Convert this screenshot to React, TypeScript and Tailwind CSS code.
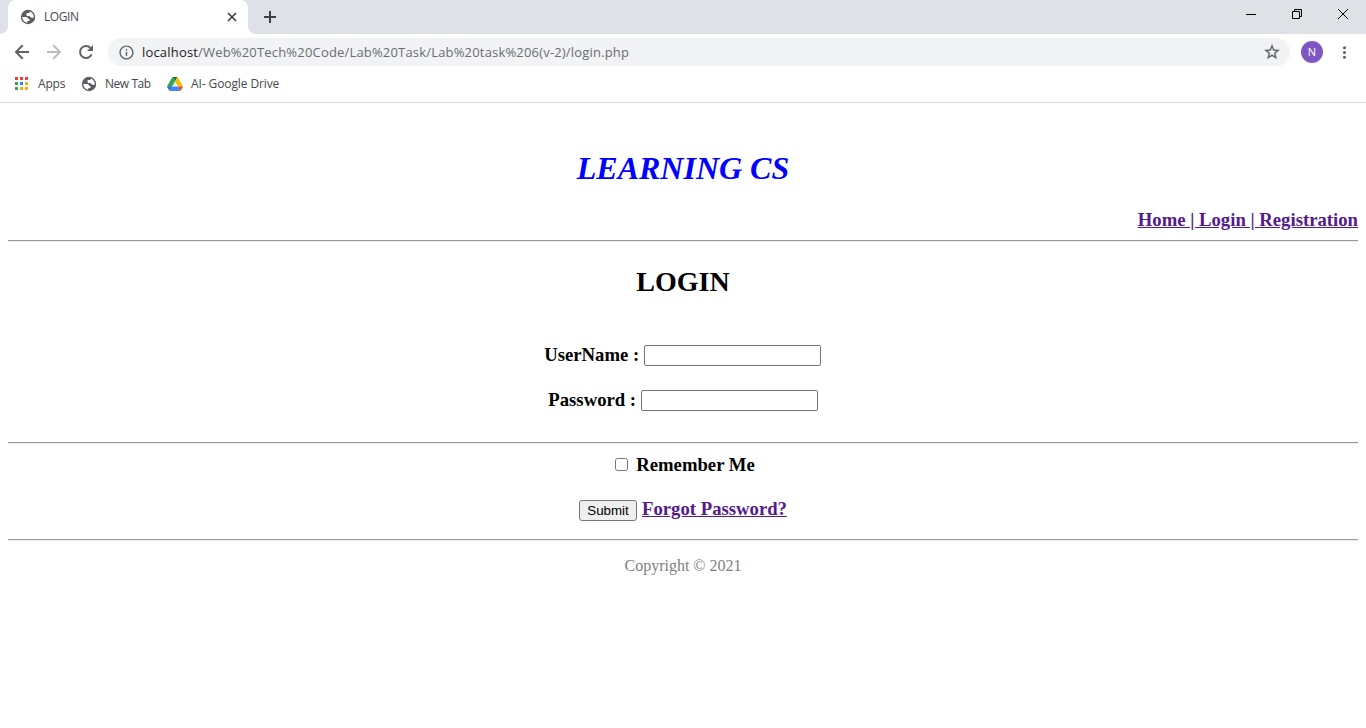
import React from "react";
import { MdInfoOutline, MdMoreVert } from "react-icons/md";

function Globe() {
  return (
    <svg width="16" height="16" viewBox="0 0 16 16" className="shrink-0">
      <circle cx="8" cy="8" r="7.2" fill="#5a5e63" />
      <path
        d="M2.300 8h3.600c1.500 0 2.300.8 2.300 2h1.200v2.100H7.300v1.600C4.400 13.400 2.300 11 2.300 8zM9.800 2.600c0 1-.5 1.500-1.500 1.500H6.600v1.900c0 .7.400 1 1.100 1h1.800c.5 1.200 1.300 1.700 2.500 1.700h1.700c.4-2.800-1.200-5.100-3.900-6.100z"
        fill="#fff"
      />
    </svg>
  );
}

function DriveLogo() {
  return (
    <svg width="16" height="14" viewBox="0 0 87.3 78" className="shrink-0">
      <path d="M43.650 25 29.900 1.200c-1.350.8-2.500 1.900-3.300 3.300L1.200 48.500A9 9 0 0 0 0 53l7 15 20.500-15z" fill="#34a853" />
      <path d="M43.650 25 57.400 1.200C56.050.4 54.500 0 52.900 0H34.400c-1.600 0-3.150.45-4.500 1.200z" fill="#188038" />
      <path d="M73.400 26.500 60.700 4.500c-.8-1.400-1.950-2.500-3.300-3.300L43.650 25 59.800 53h27.450c0-1.550-.4-3.100-1.200-4.500z" fill="#fbbc04" />
      <path d="M59.800 53H27.500L13.750 76.800c1.350.8 2.900 1.200 4.500 1.200h50.800c1.600 0 3.150-.45 4.500-1.200z" fill="#4285f4" />
      <path d="M0 53h27.500L13.750 76.800c-1.350-.8-2.500-1.900-3.300-3.300L1.200 57.500C.4 56.100 0 54.550 0 53z" fill="#2f74e0" />
      <path d="M59.800 53h27.500c0 1.550-.4 3.100-1.200 4.500l-9.250 16c-.8 1.400-1.950 2.500-3.300 3.300z" fill="#ea4335" />
    </svg>
  );
}

function AppsGrid() {
  return (
    <svg width="13" height="13" viewBox="0 0 13 13" shapeRendering="crispEdges" className="shrink-0">
      <path d="M0 0h3v3H0zM5 0h3v3H5zM10 0h3v3h-3z" fill="#ea4335" />
      <path d="M0 5h3v3H0zM0 10h3v3H0z" fill="#34a853" />
      <path d="M5 5h3v3H5z" fill="#1a88ff" />
      <path d="M10 5h3v3h-3zM5 10h3v3H5zM10 10h3v3h-3z" fill="#fbab05" />
    </svg>
  );
}

function TabStrip() {
  return (
    <div className="flex h-[34px] bg-[#dee1e6]">
      <svg width="8" height="34" viewBox="0 0 8 34" className="shrink-0">
        <path d="M8 26v8H0a8 8 0 0 0 8-8z" fill="#fff" />
      </svg>
      <div className="flex w-60 items-center rounded-t-lg bg-white pr-2.5 pl-3">
        <Globe />
        <span className="ml-2 grow text-[12px] tracking-[-0.4px] text-[#45484c]">LOGIN</span>
        <svg width="12" height="12" viewBox="0 0 12 12">
          <path d="M2 2l8 8M10 2l-8 8" stroke="#3c4043" strokeWidth="1.7" />
        </svg>
      </div>
      <svg width="8" height="34" viewBox="0 0 8 34" className="shrink-0">
        <path d="M0 26v8h8a8 8 0 0 1-8-8z" fill="#fff" />
      </svg>
      <svg width="28" height="34" viewBox="0 0 28 34">
        <path d="M14 11v12M8 17h12" stroke="#3c4043" strokeWidth="2" />
      </svg>
      <div className="ml-auto flex">
        <svg width="46" height="30" viewBox="0 0 46 30" shapeRendering="crispEdges">
          <path d="M18 14h10v1H18z" />
        </svg>
        <svg width="46" height="30" viewBox="0 0 46 30" fill="none" stroke="#000">
          <path d="M18.500 11.500h7v7h-7zM20.500 11.500v-2h7v7h-2" />
        </svg>
        <svg width="46" height="30" viewBox="0 0 46 30" stroke="#000">
          <path d="M18 9l10 10M28 9L18 19" />
        </svg>
      </div>
    </div>
  );
}

function Toolbar() {
  return (
    <div className="flex h-9 items-center pr-[13px] pl-3 text-[#5f6368]">
      <svg width="20" height="20" viewBox="0 0 20 20" fill="none" stroke="currentColor" strokeWidth="2" className="mr-3 shrink-0">
        <path d="M17 10H4.500M10.700 3.300L4 10l6.700 6.700" />
      </svg>
      <svg width="20" height="20" viewBox="0 0 20 20" fill="none" stroke="#babcbe" strokeWidth="2" className="mr-3 shrink-0">
        <path d="M3 10h12.500M9.300 3.300L16 10l-6.700 6.700" />
      </svg>
      <svg width="20" height="20" viewBox="0 0 20 20" className="mr-3 shrink-0">
        <path d="M15.600 12.300A6 6 0 1 1 14.500 6" fill="none" stroke="currentColor" strokeWidth="2" />
        <path d="M17 3v6h-6z" fill="currentColor" />
      </svg>
      <div className="flex h-7 grow items-center rounded-full bg-[#f1f3f4] pr-[9px] pl-2.5">
        <MdInfoOutline size={17} />
        <span className="mt-px ml-[7px] grow text-[13px] tracking-[0.180px] text-[#6a6d71]">
          <span className="text-[#202124]">localhost</span>/Web%20Tech%20Code/Lab%20Task/Lab%20task%206(v-2)/login.php
        </span>
        <svg width="18" height="18" viewBox="0 0 24 24" fill="currentColor" stroke="currentColor" strokeWidth="0.4">
          <path d="M22 9.240l-7.190-.62L12 2 9.190 8.630 2 9.240l5.460 4.730L5.820 21 12 17.270 18.180 21l-1.630-7.030L22 9.240zM12 15.400l-3.760 2.270 1-4.280-3.320-2.880 4.380-.38L12 6.100l1.710 4.040 4.380.38-3.320 2.880 1 4.280L12 15.400z" />
        </svg>
      </div>
      <div className="ml-[11px] flex size-[22px] items-center justify-center rounded-full bg-[#7e57c2] text-[11px] text-white">N</div>
      <MdMoreVert size={19} className="ml-3 -mr-px" />
    </div>
  );
}

function Bookmarks() {
  return (
    <div className="flex h-[33px] items-center border-b border-[#dadce0] pb-[5px] pl-[15px] text-[12px] tracking-[-0.2px] text-[#45484c]">
      <AppsGrid />
      <span className="ml-2.5 w-[43px]">Apps</span>
      <Globe />
      <span className="ml-2 w-[62px] tracking-[-0.450px]">New Tab</span>
      <DriveLogo />
      <span className="ml-2 tracking-[-0.1px]">AI- Google Drive</span>
    </div>
  );
}

function Rule() {
  return <hr className="h-0.5 border-t border-b border-t-[#9a9a9a] border-b-[#eeeeee]" />;
}

const fieldClass = "mt-px ml-[4.600px] h-[21px] w-[177px] rounded-[2px] border border-[#767676] bg-white";

export default function App() {
  return (
    <div className="flex h-[728px] flex-col overflow-hidden bg-white font-['Open_Sans',sans-serif]">
      <TabStrip />
      <Toolbar />
      <Bookmarks />
      <main className="px-2 font-['Liberation_Serif',serif] text-[18.720px] leading-[21px] font-bold text-black">
        <h1 className="mt-[47px] text-center text-[32px] leading-[36px] text-[#0000ff] italic">LEARNING CS</h1>
        <nav className="mt-[23px] mb-[10px] text-right text-[#551a8b]">
          <a href="#home" className="underline">Home | </a>
          <a href="#login" className="underline">Login | </a>
          <a href="#registration" className="underline">Registration</a>
        </nav>
        <Rule />
        <h2 className="mt-[24px] text-center text-[28px] leading-[32px]">LOGIN</h2>
        <form>
          <div className="mt-[46px] flex h-[22px] justify-center pr-px">
            <label htmlFor="user">UserName :</label>
            <input id="user" className={fieldClass} />
          </div>
          <div className="mt-[23px] flex h-[22px] justify-center">
            <label htmlFor="pass">Password :</label>
            <input id="pass" type="password" className={fieldClass} />
          </div>
          <div className="mt-[31px]"><Rule /></div>
          <div className="mt-[10px] flex justify-center pl-1">
            <input id="remember" type="checkbox" className="mt-[4px] mr-2 size-[13px]" />
            <label htmlFor="remember">Remember Me</label>
          </div>
          <div className="mt-[23px] flex justify-center">
            <button type="button" className="mt-0.5 mr-[5px] h-[21px] w-[58px] rounded-[3px] border border-[#767676] bg-[#efefef] font-['Liberation_Sans',sans-serif] text-[13.333px] leading-[15px] font-normal">Submit</button>
            <a href="#forgot" className="text-[#551a8b] underline">Forgot Password?</a>
          </div>
        </form>
        <div className="mt-[18px]"><Rule /></div>
        <footer className="mt-[16px] text-center text-[16px] leading-[18px] font-normal text-[#808080]">Copyright © 2021</footer>
      </main>
    </div>
  );
}
